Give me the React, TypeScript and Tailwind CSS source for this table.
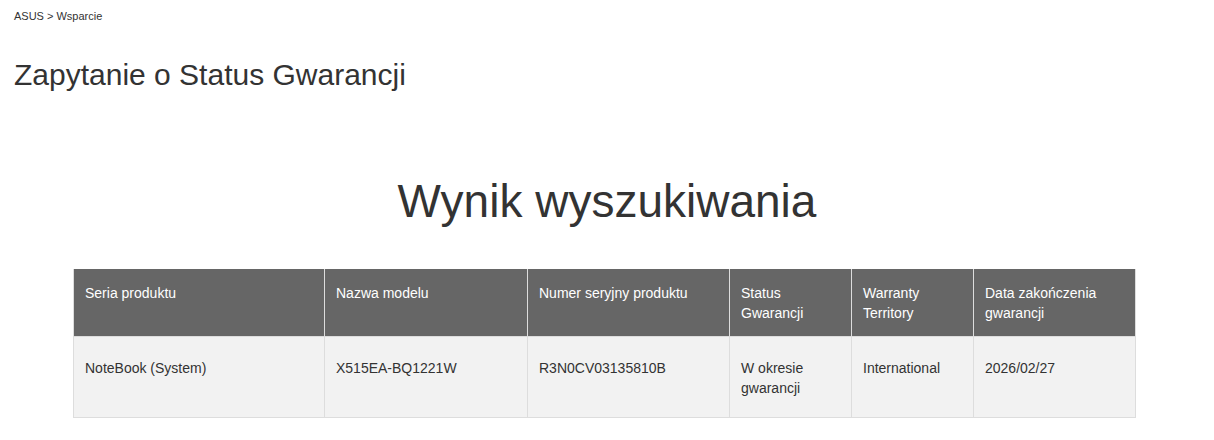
const headers = [
  { label: 'Seria produktu', w: 'w-[251px]' },
  { label: 'Nazwa modelu', w: 'w-[203px]' },
  { label: 'Numer seryjny produktu', w: 'w-[202px]' },
  { label: 'Status Gwarancji', w: 'w-[122px]' },
  { label: 'Warranty Territory', w: 'w-[122px]' },
  { label: 'Data zakończenia gwarancji', w: 'w-[162px]' },
];

const row = [
  'NoteBook (System)',
  'X515EA-BQ1221W',
  'R3N0CV03135810B',
  'W okresie gwarancji',
  'International',
  '2026/02/27',
];

const App = () => {
  return (
    <div className="min-h-[440px] bg-white text-[#333] font-['Liberation_Sans',Arial,sans-serif]">
      <div className="px-[14px] pt-[10px]">
        <p className="text-[11px] leading-[13px] text-[#333]">ASUS &gt; Wsparcie</p>
        <h1 className="mt-[34px] text-[30px] leading-[36px] font-normal">Zapytanie o Status Gwarancji</h1>
      </div>

      <h2 className="mt-[81px] text-center text-[46px] leading-[54px] font-normal text-[#333]">
        Wynik wyszukiwania
      </h2>

      <div className="mt-[41px] flex justify-center pr-[5px]">
        <table className="w-[1062px] border-collapse table-fixed text-[14px] leading-[20px]">
          <thead>
            <tr className="h-[67px] bg-[#666]">
              {headers.map((h, i) => (
                <th
                  key={i}
                  className={`${h.w} border-x border-[#ddd] px-[11px] pt-[14px] pb-[13px] text-left align-top font-normal text-white`}
                >
                  {h.label}
                </th>
              ))}
            </tr>
          </thead>
          <tbody>
            <tr className="h-[81px] bg-[#f2f2f2]">
              {row.map((c, i) => (
                <td key={i} className="border border-[#ddd] px-[11px] pt-[21px] pb-[19px] align-top">
                  {c}
                </td>
              ))}
            </tr>
          </tbody>
        </table>
      </div>
    </div>
  );
};

export default App;
